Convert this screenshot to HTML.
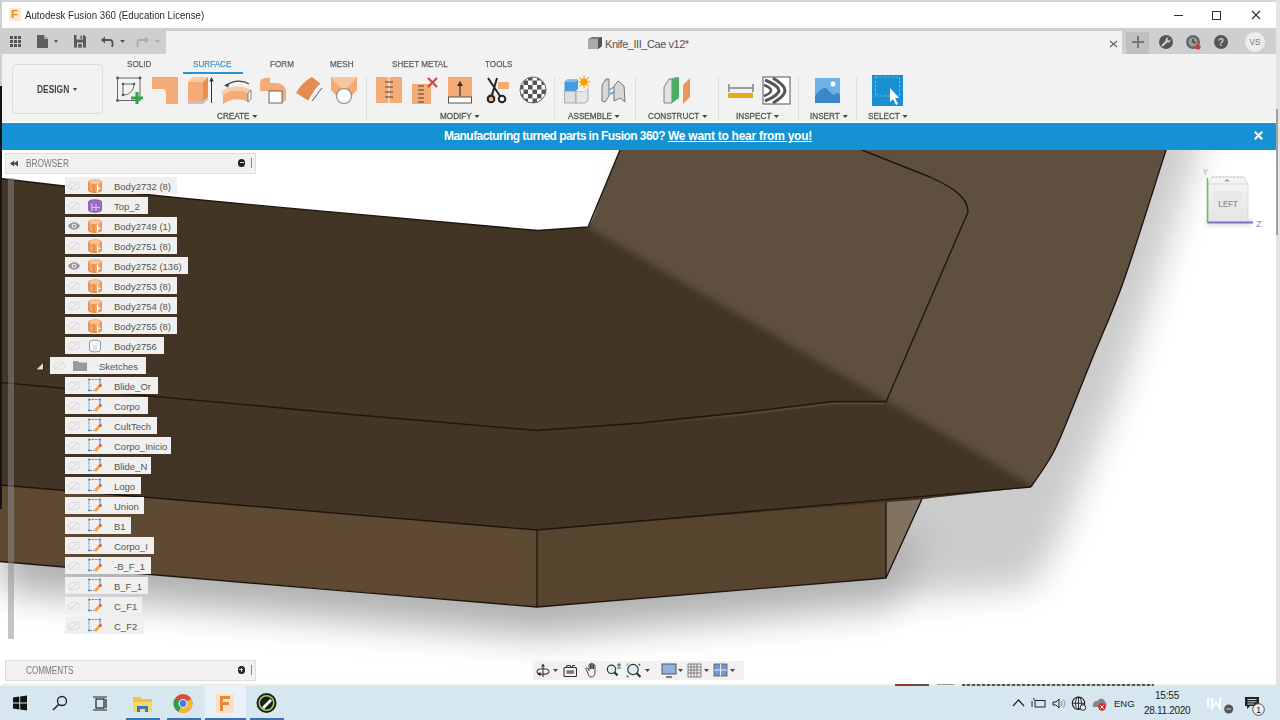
<!DOCTYPE html>
<html><head><meta charset="utf-8">
<style>
*{margin:0;padding:0;box-sizing:border-box}
html,body{width:1280px;height:720px;overflow:hidden;background:#fff}
body{position:relative;font-family:"Liberation Sans",sans-serif;color:#333}
.a{position:absolute}
.nx{position:absolute;white-space:nowrap;transform-origin:0 0}
.tab{position:absolute;top:58.5px;font-size:9.3px;color:#5e5e5e;-webkit-text-stroke:.25px #5e5e5e;transform:scaleX(.875);transform-origin:0 0;white-space:nowrap}
.grp{position:absolute;top:110px;font-size:9.5px;color:#555;-webkit-text-stroke:.3px #555;transform:scaleX(.86);transform-origin:0 0;white-space:nowrap}
.grp i,.dd{display:inline-block;width:0;height:0;border-left:3px solid transparent;border-right:3px solid transparent;border-top:3.5px solid #444;margin-left:3px;vertical-align:1.5px;-webkit-text-stroke:0}
.sep{position:absolute;top:77px;width:1px;height:43px;background:#dedede}
.row{position:absolute;height:17px;background:#f0f0f0;font-size:9.5px;color:#555;line-height:17px;white-space:nowrap}
.row span{position:absolute;left:49px;top:1px}
.row svg{position:absolute}
</style></head><body>

<svg class="a" style="left:0;top:150px" width="1280" height="536" viewBox="0 150 1280 536">
<defs>
<filter id="sh" x="-30%" y="-30%" width="160%" height="160%" color-interpolation-filters="sRGB"><feGaussianBlur stdDeviation="17"/></filter>
<filter id="sh2" x="-30%" y="-30%" width="160%" height="160%" color-interpolation-filters="sRGB"><feGaussianBlur stdDeviation="17"/></filter>
<filter id="cr" x="-10%" y="-10%" width="120%" height="120%" color-interpolation-filters="sRGB"><feGaussianBlur stdDeviation="3.5"/></filter>
<linearGradient id="hlg" gradientUnits="userSpaceOnUse" x1="640" y1="0" x2="884" y2="0"><stop offset="0" stop-color="#54432e" stop-opacity="0"/><stop offset=".45" stop-color="#54432e" stop-opacity="1"/><stop offset="1" stop-color="#57462f"/></linearGradient>
<clipPath id="cl"><path d="M0,178.5 L64,186 L180,198 L300,209.2 L538,230.5 L588,227 L620,150 L1166,150 C1159.0,171.7 1136.3,245.2 1124,280 C1111.7,314.8 1102.5,333.0 1092,359 C1081.5,385.0 1068.2,419.2 1061,436 C1053.8,452.8 1054.0,451.5 1049,460 C1044.0,468.5 1034.0,482.5 1031,487 L922,499 L886,578 L537,607 L0,561.5 Z"/></clipPath>
</defs>
<rect x="0" y="150" width="1276" height="536" fill="#fff"/>
<path d="M0,178.5 L64,186 L180,198 L300,209.2 L538,230.5 L588,227 L620,150 L640,0 L1214,0 L1166,150 C1159.0,171.7 1136.3,245.2 1124,280 C1111.7,314.8 1102.5,333.0 1092,359 C1081.5,385.0 1068.2,419.2 1061,436 C1053.8,452.8 1054.0,451.5 1049,460 C1044.0,468.5 1034.0,482.5 1031,487 L537,530 L0,485 Z" transform="translate(0,100)" fill="#000" opacity="0.2" filter="url(#sh)"/>
<path d="M0,485 L537,530 L886,500 L922,499 L886,578 L537,607 L0,561.5 Z" transform="translate(6,36)" fill="#000" opacity="0.13" filter="url(#sh2)"/>
<g clip-path="url(#cl)">
<path d="M0,470 L537,515 L886,486 L940,480 L886,578 L537,607 L0,561.5 Z" fill="#5e4a32"/>
<path d="M537,515 L886,486 L930,484 L886,578 L537,607 Z" fill="#57442f"/>
<path d="M886,486 L940,480 L886,578 Z" fill="#827361"/>
<path d="M0,160 L538,230 L588,227 L640,150 L1200,150 L1200,490 L1040,490 L537,530 L0,485 Z" fill="#433525"/>
<g filter="url(#cr)"><path d="M610,120 L1200,120 L1200,500 L1040,490 L588,227 Z" fill="#5e4f3f"/></g>
<path d="M640,425 L742,414.5 L833,403.5 L884,403.5" stroke="url(#hlg)" stroke-width="2.4" fill="none"/>

</g>
<g fill="none" stroke="#1e150e" stroke-width="1.35" stroke-linejoin="round">
<path d="M0,178.5 L64,186 L180,198 L300,209.2 L538,230.5 L588,227 L620,150"/>
<path d="M862,150 L930,177 C952,187 968,197 968,212 L886,402"/>
<path d="M0,382.4 L60,388 L260,406 L340,413.5 L537,430.5 L640,423 L742,412.5 L833,401.5 L886,401.5"/>
<path d="M0,485 L537,530 L1031,487"/>
<path d="M1166,150 C1159.0,171.7 1136.3,245.2 1124,280 C1111.7,314.8 1102.5,333.0 1092,359 C1081.5,385.0 1068.2,419.2 1061,436 C1053.8,452.8 1054.0,451.5 1049,460 C1044.0,468.5 1034.0,482.5 1031,487"/>
<path d="M537,530 L537,607"/>
<path d="M886,502 L886,578"/>
<path d="M0,561.5 L180,577 L340,590.6 L537,607 L886,578 L922,499"/>
</g>
</svg>

<div class="a" style="left:0;top:0;width:1280px;height:2px;background:#d6d6d6"></div>
<div class="a" style="left:0;top:2px;width:1276px;height:26px;background:#fff"></div>
<div class="a" style="left:0;top:0;width:2px;height:86px;background:#cfcfcf"></div>
<div class="a" style="left:0;top:86px;width:2px;height:423px;background:#141414"></div>
<div class="a" style="left:1276px;top:0;width:4px;height:686px;background:#e3e3e3"></div>
<div class="a" style="left:1276px;top:109px;width:2px;height:126px;background:#a0a0a0"></div>

<div class="a" style="left:9px;top:8px;width:12px;height:13px;background:#fde6cf;border-radius:1px"></div>
<div class="a" style="left:11px;top:8px;font-size:11.5px;font-weight:bold;color:#e58a2d">F</div>
<div class="nx" style="left:25px;top:9px;font-size:11px;transform:scaleX(.88);color:#2a2a2a">Autodesk Fusion 360 (Education License)</div>
<div class="a" style="left:1174px;top:15px;width:9px;height:1px;background:#333"></div>
<div class="a" style="left:1212px;top:11px;width:9px;height:9px;border:1px solid #333"></div>
<svg class="a" style="left:1251px;top:10px" width="10" height="10"><path d="M1,1 L9,9 M9,1 L1,9" stroke="#333" stroke-width="1.1"/></svg>

<div class="a" style="left:166px;top:28px;width:956px;height:3px;background:#cfcfcf"></div>
<div class="a" style="left:166px;top:31px;width:956px;height:23px;background:#f2f2f2"></div>
<div class="a" style="left:2px;top:28px;width:164px;height:26px;background:#cfcfcf"></div>
<div class="a" style="left:1122px;top:28px;width:154px;height:26px;background:#cfcfcf"></div>
<div class="a" style="left:1126px;top:32px;width:23px;height:22px;background:#c0c0c0"></div>
<svg class="a" style="left:0;top:28px" width="170" height="26" viewBox="0 28 170 26">
<g fill="#555">
<rect x="10" y="36" width="3" height="3"/><rect x="14" y="36" width="3" height="3"/><rect x="18" y="36" width="3" height="3"/>
<rect x="10" y="40" width="3" height="3"/><rect x="14" y="40" width="3" height="3"/><rect x="18" y="40" width="3" height="3"/>
<rect x="10" y="44" width="3" height="3"/><rect x="14" y="44" width="3" height="3"/><rect x="18" y="44" width="3" height="3"/>
<path d="M37,35 L44,35 L48,39 L48,48 L37,48 Z" fill="#5e5e5e"/><path d="M44,35 L44,39 L48,39 Z" fill="#a8a8a8"/>
<path d="M54,40 L58,40 L56,43 Z"/>
<path d="M74,35 L84,35 L86,37 L86,47.5 L74,47.5 Z" fill="#5a5a5a"/><rect x="76.5" y="35" width="6.5" height="4.5" fill="#cfcfcf"/><rect x="80.5" y="35.8" width="1.6" height="3" fill="#5a5a5a"/><rect x="77" y="42.5" width="6" height="5" fill="#cfcfcf"/><rect x="78.2" y="43.8" width="3.6" height="3.7" fill="#5a5a5a"/>
<path d="M120,40 L125,40 L122.5,43 Z"/>
</g>
<path d="M104,40 L110,40 C113,40 113,44 112,47" fill="none" stroke="#555" stroke-width="1.8"/>
<path d="M101,40 L105,36.5 L105,43.5 Z" fill="#555"/>
<path d="M146,40 L140,40 C137,40 137,44 138,47" fill="none" stroke="#aaa" stroke-width="1.8"/>
<path d="M149,40 L145,36.5 L145,43.5 Z" fill="#aaa"/>
<path d="M155,40 L160,40 L157.5,43 Z" fill="#aaa"/>
</svg>
<svg class="a" style="left:587px;top:36px" width="16" height="14" viewBox="0 0 16 14">
<path d="M1,3 L5,1 L15,1 L15,10 L11,13 L1,13 Z" fill="#777"/>
<path d="M1,3 L11,3 L11,13 L1,13 Z" fill="#aaa"/><path d="M11,3 L15,1 L15,10 L11,13 Z" fill="#555"/>
</svg>
<div class="nx" style="left:605px;top:37.5px;font-size:11px;letter-spacing:-0.45px;color:#555">Knife_III_Cae v12*</div>
<svg class="a" style="left:1109px;top:40px" width="9" height="8"><path d="M1,1 L8,7 M8,1 L1,7" stroke="#666" stroke-width="1.3"/></svg>
<svg class="a" style="left:1122px;top:28px" width="154" height="26" viewBox="1122 28 154 26">
<path d="M1132,42 L1144,42 M1138,36 L1138,48" stroke="#777" stroke-width="2"/>
<circle cx="1166" cy="42" r="7" fill="#555"/>
<path d="M1162,46 L1167,41" stroke="#cfcfcf" stroke-width="2"/><circle cx="1168" cy="40" r="2.5" fill="#cfcfcf"/><circle cx="1169" cy="39" r="1.5" fill="#555"/>
<circle cx="1193" cy="42" r="7" fill="#666"/><circle cx="1193" cy="42" r="4.5" fill="#999"/><path d="M1193,39 L1193,42 L1196,43" stroke="#333" stroke-width="1.3" fill="none"/>
<circle cx="1198" cy="47" r="2.6" fill="#e03030"/>
<circle cx="1221" cy="42" r="7" fill="#555"/>
<text x="1221" y="46" font-size="10" font-weight="bold" fill="#cfcfcf" text-anchor="middle" font-family="Liberation Sans">?</text>
<circle cx="1255" cy="42" r="10" fill="#ececec"/>
<text x="1255" y="45.5" font-size="9" fill="#777" text-anchor="middle" font-family="Liberation Sans" transform="translate(1255,0) scale(.9,1) translate(-1255,0)">VS</text>
</svg>

<div class="a" style="left:2px;top:54px;width:1274px;height:68px;background:#f2f2f2"></div>
<div class="a" style="left:12px;top:64px;width:91px;height:50px;border:1px solid #dcdcdc;border-radius:4px;background:#f2f2f2"></div>
<div class="nx" style="left:37px;top:84px;font-size:10px;font-weight:bold;color:#444;transform:scaleX(.84)">DESIGN</div>
<div class="a" style="left:73px;top:88px;width:0;height:0;border-left:2.5px solid transparent;border-right:2.5px solid transparent;border-top:3px solid #444"></div>
<div class="tab" style="left:127px">SOLID</div>
<div class="tab" style="left:193px;color:#3a9ad6;-webkit-text-stroke:.25px #3a9ad6">SURFACE</div>
<div class="a" style="left:183px;top:72px;width:60px;height:2px;background:#2b92cf"></div>
<div class="tab" style="left:270px">FORM</div>
<div class="tab" style="left:330px">MESH</div>
<div class="tab" style="left:392px">SHEET METAL</div>
<div class="tab" style="left:485px">TOOLS</div>
<div class="grp" style="left:217px">CREATE<i></i></div>
<div class="grp" style="left:440px">MODIFY<i></i></div>
<div class="grp" style="left:568px">ASSEMBLE<i></i></div>
<div class="grp" style="left:648px">CONSTRUCT<i></i></div>
<div class="grp" style="left:736px">INSPECT<i></i></div>
<div class="grp" style="left:810px">INSERT<i></i></div>
<div class="grp" style="left:868px">SELECT<i></i></div>
<div class="sep" style="left:366px"></div>
<div class="sep" style="left:554px"></div>
<div class="sep" style="left:635px"></div>
<div class="sep" style="left:718px"></div>
<div class="sep" style="left:798px"></div>
<div class="sep" style="left:856px"></div>

<svg class="a" style="left:100px;top:70px" width="820" height="40" viewBox="100 70 820 40">
<!-- sketch -->
<g stroke="#666" stroke-width="1" fill="none"><rect x="117.5" y="78" width="22.5" height="22.5"/><path d="M123,95 L123,84 L134,84"/><path d="M134,84 C134,90 130,95 123,95"/></g>
<g fill="#555"><circle cx="117.5" cy="78" r="1.4"/><circle cx="140" cy="78" r="1.4"/><circle cx="117.5" cy="100.5" r="1.4"/><circle cx="123" cy="84" r="1.3"/><circle cx="134" cy="84" r="1.3"/><circle cx="123" cy="95" r="1.3"/></g>
<path d="M131,98 L143,98 M137,92 L137,104" stroke="#2ea84a" stroke-width="3.2"/>
<!-- L shape -->
<path d="M152,77 L178,77 L178,104 L166,104 L166,93 C166,90 165,89 162,89 L152,89 Z" fill="#f4ab75"/>
<!-- extrude box -->
<path d="M188,82 L203,82 L203,101 L188,101 Z" fill="#f4ab75"/>
<path d="M188,82 L192.5,77 L208,77 L203,82 Z" fill="#f9c9a0"/>
<path d="M203,82 L208,77 L208,97 L203,101 Z" fill="#e8914f"/>
<path d="M188,101 L203,101 L208,97 L208,99.5 L203,104 L188,104 Z" fill="#c4c4c4"/>
<path d="M211.5,103 L211.5,79" stroke="#333" stroke-width="1"/><path d="M209.3,81.5 L211.5,77 L213.7,81.5 Z" fill="#333"/>
<!-- revolve -->
<path d="M223,95 C230,89 242,89 248,93 L248,102 C242,98 230,98 223,104 Z" fill="#f4ab75"/>
<path d="M223,95 C230,89 242,89 248,93 L251,90 C244,85 229,85 221,92 Z" fill="#f9cba3"/>
<path d="M248,93 L251,90 L251,99 L248,102 Z" fill="#fff" stroke="#666" stroke-width=".8"/>
<path d="M227,85 C234,80 243,80 249,84" stroke="#444" stroke-width="1.1" fill="none"/><path d="M224,85.5 L228.5,83 L228.5,87.5 Z" fill="#444"/>
<!-- boolean -->
<path d="M260,83 C260,78 266,77 270,78 L270,83 L276,83 C282,83 286,87 286,92 L286,100 L282,103 L274,103 L274,91 L260,91 Z" fill="#f4ab75"/>
<rect x="269" y="91" width="13" height="12" fill="#fff" stroke="#555" stroke-width=".9"/>
<!-- patch -->
<path d="M296,93 C300,86 306,80 312,77 L321,84 C316,88 312,95 309,101 Z" fill="#e58c50"/>
<path d="M309,101 C312,95 316,88 321,84" stroke="#fff" stroke-width="1.3" fill="none"/>
<path d="M312,101 C316,97 318,92 322,88" stroke="#555" stroke-width="1" fill="none"/>
<!-- loft -->
<path d="M331,77 L357,77 L357,90 L350,98 L338,98 L331,90 Z" fill="#f4ab75"/>
<path d="M331,77 L344,92 L357,77 Z" fill="#f8c79e"/>
<circle cx="344" cy="96" r="7.5" fill="#f8f8f8" stroke="#888" stroke-width="1.1"/>
<!-- stitch -->
<rect x="376" y="77" width="26" height="26" fill="#f4ab75"/>
<path d="M389,77 L389,103" stroke="#fff" stroke-width="1"/>
<path d="M385,82 L393,82 M385,87 L393,87 M385,92 L393,92 M385,97 L393,97" stroke="#444" stroke-width="1.2"/>
<!-- unstitch -->
<rect x="412" y="84" width="19" height="20" fill="#f4ab75"/>
<path d="M418,86 L424,86 M418,90 L424,90 M418,94 L424,94 M418,98 L424,98 M418,102 L424,102" stroke="#444" stroke-width="1.1"/>
<path d="M428,78 L437,87 M437,78 L428,87" stroke="#e0403a" stroke-width="2.2"/>
<!-- reverse normal -->
<rect x="448" y="77" width="24" height="20" fill="#f4ab75"/>
<rect x="448.5" y="97" width="23" height="6" fill="#fff" stroke="#555" stroke-width="1"/>
<path d="M460,96 L460,84" stroke="#333" stroke-width="1.2"/><path d="M457,86 L460,81 L463,86 Z" fill="#333"/>
<!-- trim scissors -->
<rect x="498" y="82" width="11" height="7" fill="#f4ab75"/><path d="M486,97 L492,92 L496,97 L490,101 Z" fill="#f4ab75"/>
<path d="M488,78 L500,96 M497,78 L492,95" stroke="#222" stroke-width="2"/>
<circle cx="491" cy="99" r="3.3" fill="none" stroke="#222" stroke-width="2"/><circle cx="502" cy="99" r="3.3" fill="none" stroke="#222" stroke-width="2"/>
<!-- checker sphere -->
<defs><pattern id="chk" x="519" y="76" width="9" height="9" patternUnits="userSpaceOnUse"><rect width="9" height="9" fill="#fff"/><rect width="4.5" height="4.5" fill="#555"/><rect x="4.5" y="4.5" width="4.5" height="4.5" fill="#555"/></pattern></defs>
<circle cx="533" cy="90" r="13" fill="url(#chk)" stroke="#666" stroke-width="1"/>
<!-- new component -->
<path d="M564.5,91 L576,91 L576,103 L564.5,103 Z" fill="#dedede" stroke="#999" stroke-width=".8"/>
<path d="M576,91 L585,91 L588,88.5 L588,100.5 L585,103 L576,103 Z" fill="#e6e6e6" stroke="#999" stroke-width=".8"/>
<path d="M576,91 L579,88.5 L588,88.5 L585,91 Z" fill="#f4f4f4"/>
<path d="M564.5,82 L567,79.5 L578,79.5 L578,89 L575.5,91 L564.5,91 Z" fill="#4a9ae0"/>
<path d="M564.5,82 L567,79.5 L578,79.5 L575.5,82 Z" fill="#7fbcef"/>
<circle cx="584" cy="82" r="3.6" fill="#f5a300"/>
<path d="M584,75.5 L584,88.5 M577.5,82 L590.5,82 M579.4,77.4 L588.6,86.6 M588.6,77.4 L579.4,86.6" stroke="#f5a300" stroke-width="1.1"/>
<!-- joint -->
<path d="M602,85 L606,79 L609,79 L609,96 L605,102 L602,101 Z" fill="#d8d8d8" stroke="#777" stroke-width="1"/>
<path d="M605.5,81 L609,79" stroke="#999" stroke-width="1"/>
<path d="M614,86 L618,81 L624,86 L625,102 L620,98 L614,101 Z" fill="#d8d8d8" stroke="#777" stroke-width="1"/>
<path d="M609,90 L614,87 M610,94 L614,92" stroke="#4a9ae0" stroke-width="1.4"/>
<!-- construct -->
<path d="M664,87 L669,79 L672,79 L672,103 L664,103 Z" fill="#e2e2e2" stroke="#777" stroke-width=".9"/>
<path d="M672,79 L679,77 L679,98 L672,103 Z" fill="#4aad63"/>
<path d="M669,79 L676,77 L679,77 L672,79 Z" fill="#999"/>
<path d="M683,85 L690,78 L690,97 L683,104 Z" fill="#e9965c"/>
<!-- measure -->
<path d="M729,84 L729,92 M753,84 L753,92 M730,88 L752,88" stroke="#444" stroke-width="1"/>
<rect x="728" y="93" width="25" height="5" fill="#e6a823"/>
<!-- zebra -->
<rect x="763" y="77" width="27" height="27" fill="#fff" stroke="#555" stroke-width="1"/>
<path d="M765,80 C775,84 779,88 779,90.5 C779,93 775,97 765,101" stroke="#555" stroke-width="3" fill="none"/>
<path d="M773,78 C783,84 785,88 785,90.5 C785,93 783,97 773,103" stroke="#555" stroke-width="3" fill="none"/>
<path d="M764,85 C769,87 771,89 771,90.5 C771,92 769,94 764,96" stroke="#555" stroke-width="2.5" fill="none"/>
<!-- insert image -->
<rect x="815" y="78" width="25" height="25" fill="#6cb2e6"/>
<path d="M815,103 L815,96 C818,92 822,88 825,88 C828,88 831,95 834,95 C836,93 838,92 840,95 L840,103 Z" fill="#3a86c8"/>
<circle cx="833" cy="84" r="2.5" fill="#fff"/>
<!-- select -->
<rect x="872" y="75" width="31" height="31" fill="#1a8fd4"/>
<rect x="875.5" y="77" width="24" height="19" fill="none" stroke="#6cc8c0" stroke-width=".9" stroke-dasharray="2.5,1.5"/>
<path d="M890,88 L890,102 L893,99 L896,105 L898,104 L895,98 L899,98 Z" fill="#fff"/>
</svg>

<div class="a" style="left:2px;top:123px;width:1274px;height:26.5px;background:#1592d3"></div>
<div class="nx" style="left:444px;top:129px;font-size:12px;font-weight:bold;letter-spacing:-0.546px;color:#fff">Manufacturing turned parts in Fusion 360?</div>
<div class="nx" style="left:668px;top:129px;font-size:12px;font-weight:bold;letter-spacing:-0.26px;color:#fff;text-decoration:underline">We want to hear from you!</div>
<svg class="a" style="left:1254px;top:131px" width="9" height="9"><path d="M.8,.8 L8.2,8.2 M8.2,.8 L.8,8.2" stroke="#fff" stroke-width="2"/></svg>

<div class="a" style="left:8px;top:178px;width:6px;height:461px;background:rgba(140,140,140,.5)"></div>
<div class="a" style="left:5px;top:153px;width:251px;height:21px;background:#f1f1f1;border:1px solid #dedede"></div>
<svg class="a" style="left:10px;top:160px" width="9" height="7"><path d="M0,3.5 L4.2,0.5 L4.2,6.5 Z M3.8,3.5 L8,0.5 L8,6.5 Z" fill="#444"/></svg>
<div class="nx" style="left:26px;top:158px;font-size:10px;color:#777;transform:scaleX(.83)">BROWSER</div>
<div class="a" style="left:237.8px;top:159px;width:7.5px;height:7.5px;border-radius:50%;background:#222"></div>
<div class="a" style="left:239.5px;top:162.3px;width:4px;height:1px;background:#ddd"></div>
<div class="a" style="left:251px;top:158px;width:1px;height:10px;background:#888"></div>

<div class="row" style="left:65px;top:177px;width:112.0px"><span>Body2732 (8)</span></div>
<svg class="a" style="left:67px;top:181px" width="14" height="10" viewBox="0 0 14 10"><path d="M1,5 C4,0 10,0 13,5 C10,10 4,10 1,5 Z" fill="none" stroke="#ddd" stroke-width="1.2"/><path d="M2,9 L12,1" stroke="#ddd" stroke-width="1.2"/></svg>
<svg class="a" style="left:88px;top:179px" width="14" height="14" viewBox="0 0 14 14"><path d="M0.7,3 C0.7,0.3 13.3,0.3 13.3,3 L13.3,11.5 C13.3,14 0.7,14 0.7,11.5 Z" fill="#f2a262" stroke="#d4792f" stroke-width=".9"/><ellipse cx="7" cy="3" rx="6.1" ry="2.2" fill="#f8c496"/><path d="M6,5 L6,13.6" stroke="#d4792f" stroke-width=".9"/><path d="M9.6,5.5 L9.6,13.8 M9.6,9.3 L12.6,9.3" stroke="#fff" stroke-width="1.3"/></svg>
<div class="row" style="left:65px;top:197px;width:82.7px"><span>Top_2</span></div>
<svg class="a" style="left:67px;top:201px" width="14" height="10" viewBox="0 0 14 10"><path d="M1,5 C4,0 10,0 13,5 C10,10 4,10 1,5 Z" fill="none" stroke="#ddd" stroke-width="1.2"/><path d="M2,9 L12,1" stroke="#ddd" stroke-width="1.2"/></svg>
<svg class="a" style="left:88px;top:199px" width="14" height="14" viewBox="0 0 14 14"><path d="M0.5,3 C0.5,0 13.5,0 13.5,3 L13.5,11 C13.5,14 0.5,14 0.5,11 Z" fill="#9a6bc9" stroke="#7a4eaa" stroke-width=".8"/><path d="M4,5 L4,12 M8,5 L8,12 M4,8.5 L12,8.5" stroke="#d8c2ee" stroke-width="1.2"/></svg>
<div class="row" style="left:65px;top:217px;width:112.0px"><span>Body2749 (1)</span></div>
<svg class="a" style="left:67px;top:221px" width="14" height="10" viewBox="0 0 14 10"><path d="M1,5 C4,0 10,0 13,5 C10,10 4,10 1,5 Z" fill="#999"/><circle cx="7" cy="5" r="2.2" fill="#eee"/><circle cx="7" cy="5" r="1.2" fill="#999"/></svg>
<svg class="a" style="left:88px;top:219px" width="14" height="14" viewBox="0 0 14 14"><path d="M0.7,3 C0.7,0.3 13.3,0.3 13.3,3 L13.3,11.5 C13.3,14 0.7,14 0.7,11.5 Z" fill="#f2a262" stroke="#d4792f" stroke-width=".9"/><ellipse cx="7" cy="3" rx="6.1" ry="2.2" fill="#f8c496"/><path d="M6,5 L6,13.6" stroke="#d4792f" stroke-width=".9"/><path d="M9.6,5.5 L9.6,13.8 M9.6,9.3 L12.6,9.3" stroke="#fff" stroke-width="1.3"/></svg>
<div class="row" style="left:65px;top:237px;width:112.0px"><span>Body2751 (8)</span></div>
<svg class="a" style="left:67px;top:241px" width="14" height="10" viewBox="0 0 14 10"><path d="M1,5 C4,0 10,0 13,5 C10,10 4,10 1,5 Z" fill="none" stroke="#ddd" stroke-width="1.2"/><path d="M2,9 L12,1" stroke="#ddd" stroke-width="1.2"/></svg>
<svg class="a" style="left:88px;top:239px" width="14" height="14" viewBox="0 0 14 14"><path d="M0.7,3 C0.7,0.3 13.3,0.3 13.3,3 L13.3,11.5 C13.3,14 0.7,14 0.7,11.5 Z" fill="#f2a262" stroke="#d4792f" stroke-width=".9"/><ellipse cx="7" cy="3" rx="6.1" ry="2.2" fill="#f8c496"/><path d="M6,5 L6,13.6" stroke="#d4792f" stroke-width=".9"/><path d="M9.6,5.5 L9.6,13.8 M9.6,9.3 L12.6,9.3" stroke="#fff" stroke-width="1.3"/></svg>
<div class="row" style="left:65px;top:257px;width:122.5px"><span>Body2752 (136)</span></div>
<svg class="a" style="left:67px;top:261px" width="14" height="10" viewBox="0 0 14 10"><path d="M1,5 C4,0 10,0 13,5 C10,10 4,10 1,5 Z" fill="#999"/><circle cx="7" cy="5" r="2.2" fill="#eee"/><circle cx="7" cy="5" r="1.2" fill="#999"/></svg>
<svg class="a" style="left:88px;top:259px" width="14" height="14" viewBox="0 0 14 14"><path d="M0.7,3 C0.7,0.3 13.3,0.3 13.3,3 L13.3,11.5 C13.3,14 0.7,14 0.7,11.5 Z" fill="#f2a262" stroke="#d4792f" stroke-width=".9"/><ellipse cx="7" cy="3" rx="6.1" ry="2.2" fill="#f8c496"/><path d="M6,5 L6,13.6" stroke="#d4792f" stroke-width=".9"/><path d="M9.6,5.5 L9.6,13.8 M9.6,9.3 L12.6,9.3" stroke="#fff" stroke-width="1.3"/></svg>
<div class="row" style="left:65px;top:277px;width:112.0px"><span>Body2753 (8)</span></div>
<svg class="a" style="left:67px;top:281px" width="14" height="10" viewBox="0 0 14 10"><path d="M1,5 C4,0 10,0 13,5 C10,10 4,10 1,5 Z" fill="none" stroke="#ddd" stroke-width="1.2"/><path d="M2,9 L12,1" stroke="#ddd" stroke-width="1.2"/></svg>
<svg class="a" style="left:88px;top:279px" width="14" height="14" viewBox="0 0 14 14"><path d="M0.7,3 C0.7,0.3 13.3,0.3 13.3,3 L13.3,11.5 C13.3,14 0.7,14 0.7,11.5 Z" fill="#f2a262" stroke="#d4792f" stroke-width=".9"/><ellipse cx="7" cy="3" rx="6.1" ry="2.2" fill="#f8c496"/><path d="M6,5 L6,13.6" stroke="#d4792f" stroke-width=".9"/><path d="M9.6,5.5 L9.6,13.8 M9.6,9.3 L12.6,9.3" stroke="#fff" stroke-width="1.3"/></svg>
<div class="row" style="left:65px;top:297px;width:112.0px"><span>Body2754 (8)</span></div>
<svg class="a" style="left:67px;top:301px" width="14" height="10" viewBox="0 0 14 10"><path d="M1,5 C4,0 10,0 13,5 C10,10 4,10 1,5 Z" fill="none" stroke="#ddd" stroke-width="1.2"/><path d="M2,9 L12,1" stroke="#ddd" stroke-width="1.2"/></svg>
<svg class="a" style="left:88px;top:299px" width="14" height="14" viewBox="0 0 14 14"><path d="M0.7,3 C0.7,0.3 13.3,0.3 13.3,3 L13.3,11.5 C13.3,14 0.7,14 0.7,11.5 Z" fill="#f2a262" stroke="#d4792f" stroke-width=".9"/><ellipse cx="7" cy="3" rx="6.1" ry="2.2" fill="#f8c496"/><path d="M6,5 L6,13.6" stroke="#d4792f" stroke-width=".9"/><path d="M9.6,5.5 L9.6,13.8 M9.6,9.3 L12.6,9.3" stroke="#fff" stroke-width="1.3"/></svg>
<div class="row" style="left:65px;top:317px;width:112.0px"><span>Body2755 (8)</span></div>
<svg class="a" style="left:67px;top:321px" width="14" height="10" viewBox="0 0 14 10"><path d="M1,5 C4,0 10,0 13,5 C10,10 4,10 1,5 Z" fill="none" stroke="#ddd" stroke-width="1.2"/><path d="M2,9 L12,1" stroke="#ddd" stroke-width="1.2"/></svg>
<svg class="a" style="left:88px;top:319px" width="14" height="14" viewBox="0 0 14 14"><path d="M0.7,3 C0.7,0.3 13.3,0.3 13.3,3 L13.3,11.5 C13.3,14 0.7,14 0.7,11.5 Z" fill="#f2a262" stroke="#d4792f" stroke-width=".9"/><ellipse cx="7" cy="3" rx="6.1" ry="2.2" fill="#f8c496"/><path d="M6,5 L6,13.6" stroke="#d4792f" stroke-width=".9"/><path d="M9.6,5.5 L9.6,13.8 M9.6,9.3 L12.6,9.3" stroke="#fff" stroke-width="1.3"/></svg>
<div class="row" style="left:65px;top:337px;width:99.0px"><span>Body2756</span></div>
<svg class="a" style="left:67px;top:341px" width="14" height="10" viewBox="0 0 14 10"><path d="M1,5 C4,0 10,0 13,5 C10,10 4,10 1,5 Z" fill="none" stroke="#ddd" stroke-width="1.2"/><path d="M2,9 L12,1" stroke="#ddd" stroke-width="1.2"/></svg>
<svg class="a" style="left:88px;top:339px" width="14" height="14" viewBox="0 0 14 14"><path d="M1.5,3 C1.5,0.5 12.5,0.5 12.5,3 L12.5,11 C12.5,13.5 1.5,13.5 1.5,11 Z" fill="#f7f7f7" stroke="#7a8fa5" stroke-width=".9"/><path d="M6,6 L6,11 M8,6 L8,11" stroke="#bbb" stroke-width=".8"/></svg>
<div class="row" style="left:50px;top:357px;width:96px"><span style="left:49px">Sketches</span></div>
<svg class="a" style="left:35px;top:361px" width="10" height="10"><path d="M8.5,1 L8.5,9 L0.5,9 Z" fill="#ddd" stroke="#222" stroke-width="1"/></svg>
<svg class="a" style="left:52px;top:361px" width="14" height="10" viewBox="0 0 14 10"><path d="M1,5 C4,0 10,0 13,5 C10,10 4,10 1,5 Z" fill="none" stroke="#ddd" stroke-width="1.2"/><path d="M2,9 L12,1" stroke="#ddd" stroke-width="1.2"/></svg>
<svg class="a" style="left:73px;top:360px" width="14" height="11"><path d="M0,1 L5,1 L6,2.5 L14,2.5 L14,11 L0,11 Z" fill="#9a9a9a"/></svg>
<div class="row" style="left:65px;top:377px;width:93.0px"><span>Blide_Or</span></div>
<svg class="a" style="left:67px;top:381px" width="14" height="10" viewBox="0 0 14 10"><path d="M1,5 C4,0 10,0 13,5 C10,10 4,10 1,5 Z" fill="none" stroke="#ddd" stroke-width="1.2"/><path d="M2,9 L12,1" stroke="#ddd" stroke-width="1.2"/></svg>
<svg class="a" style="left:88px;top:378px" width="14" height="14" viewBox="0 0 14 14"><path d="M1,1.5 L12,1.5 M1,1.5 L1,12.5 L6,12.5" stroke="#4a8dc7" stroke-width="1" fill="none" stroke-dasharray="2,1"/><path d="M12,1.5 L12,7" stroke="#4a8dc7" stroke-width="1" fill="none"/><circle cx="1" cy="1.5" r="1" fill="#4a8dc7"/><circle cx="12" cy="1.5" r="1" fill="#4a8dc7"/><circle cx="1" cy="12.5" r="1" fill="#4a8dc7"/><path d="M7,13 L12.5,7" stroke="#f0a23a" stroke-width="2.6"/><circle cx="12.5" cy="7.5" r="1.3" fill="#e0403a"/></svg>
<div class="row" style="left:65px;top:397px;width:82.7px"><span>Corpo</span></div>
<svg class="a" style="left:67px;top:401px" width="14" height="10" viewBox="0 0 14 10"><path d="M1,5 C4,0 10,0 13,5 C10,10 4,10 1,5 Z" fill="none" stroke="#ddd" stroke-width="1.2"/><path d="M2,9 L12,1" stroke="#ddd" stroke-width="1.2"/></svg>
<svg class="a" style="left:88px;top:398px" width="14" height="14" viewBox="0 0 14 14"><path d="M1,1.5 L12,1.5 M1,1.5 L1,12.5 L6,12.5" stroke="#4a8dc7" stroke-width="1" fill="none" stroke-dasharray="2,1"/><path d="M12,1.5 L12,7" stroke="#4a8dc7" stroke-width="1" fill="none"/><circle cx="1" cy="1.5" r="1" fill="#4a8dc7"/><circle cx="12" cy="1.5" r="1" fill="#4a8dc7"/><circle cx="1" cy="12.5" r="1" fill="#4a8dc7"/><path d="M7,13 L12.5,7" stroke="#f0a23a" stroke-width="2.6"/><circle cx="12.5" cy="7.5" r="1.3" fill="#e0403a"/></svg>
<div class="row" style="left:65px;top:417px;width:92.0px"><span>CultTech</span></div>
<svg class="a" style="left:67px;top:421px" width="14" height="10" viewBox="0 0 14 10"><path d="M1,5 C4,0 10,0 13,5 C10,10 4,10 1,5 Z" fill="none" stroke="#ddd" stroke-width="1.2"/><path d="M2,9 L12,1" stroke="#ddd" stroke-width="1.2"/></svg>
<svg class="a" style="left:88px;top:418px" width="14" height="14" viewBox="0 0 14 14"><path d="M1,1.5 L12,1.5 M1,1.5 L1,12.5 L6,12.5" stroke="#4a8dc7" stroke-width="1" fill="none" stroke-dasharray="2,1"/><path d="M12,1.5 L12,7" stroke="#4a8dc7" stroke-width="1" fill="none"/><circle cx="1" cy="1.5" r="1" fill="#4a8dc7"/><circle cx="12" cy="1.5" r="1" fill="#4a8dc7"/><circle cx="1" cy="12.5" r="1" fill="#4a8dc7"/><path d="M7,13 L12.5,7" stroke="#f0a23a" stroke-width="2.6"/><circle cx="12.5" cy="7.5" r="1.3" fill="#e0403a"/></svg>
<div class="row" style="left:65px;top:437px;width:105.8px"><span>Corpo_Inicio</span></div>
<svg class="a" style="left:67px;top:441px" width="14" height="10" viewBox="0 0 14 10"><path d="M1,5 C4,0 10,0 13,5 C10,10 4,10 1,5 Z" fill="none" stroke="#ddd" stroke-width="1.2"/><path d="M2,9 L12,1" stroke="#ddd" stroke-width="1.2"/></svg>
<svg class="a" style="left:88px;top:438px" width="14" height="14" viewBox="0 0 14 14"><path d="M1,1.5 L12,1.5 M1,1.5 L1,12.5 L6,12.5" stroke="#4a8dc7" stroke-width="1" fill="none" stroke-dasharray="2,1"/><path d="M12,1.5 L12,7" stroke="#4a8dc7" stroke-width="1" fill="none"/><circle cx="1" cy="1.5" r="1" fill="#4a8dc7"/><circle cx="12" cy="1.5" r="1" fill="#4a8dc7"/><circle cx="1" cy="12.5" r="1" fill="#4a8dc7"/><path d="M7,13 L12.5,7" stroke="#f0a23a" stroke-width="2.6"/><circle cx="12.5" cy="7.5" r="1.3" fill="#e0403a"/></svg>
<div class="row" style="left:65px;top:457px;width:86.0px"><span>Blide_N</span></div>
<svg class="a" style="left:67px;top:461px" width="14" height="10" viewBox="0 0 14 10"><path d="M1,5 C4,0 10,0 13,5 C10,10 4,10 1,5 Z" fill="none" stroke="#ddd" stroke-width="1.2"/><path d="M2,9 L12,1" stroke="#ddd" stroke-width="1.2"/></svg>
<svg class="a" style="left:88px;top:458px" width="14" height="14" viewBox="0 0 14 14"><path d="M1,1.5 L12,1.5 M1,1.5 L1,12.5 L6,12.5" stroke="#4a8dc7" stroke-width="1" fill="none" stroke-dasharray="2,1"/><path d="M12,1.5 L12,7" stroke="#4a8dc7" stroke-width="1" fill="none"/><circle cx="1" cy="1.5" r="1" fill="#4a8dc7"/><circle cx="12" cy="1.5" r="1" fill="#4a8dc7"/><circle cx="1" cy="12.5" r="1" fill="#4a8dc7"/><path d="M7,13 L12.5,7" stroke="#f0a23a" stroke-width="2.6"/><circle cx="12.5" cy="7.5" r="1.3" fill="#e0403a"/></svg>
<div class="row" style="left:65px;top:477px;width:75.6px"><span>Logo</span></div>
<svg class="a" style="left:67px;top:481px" width="14" height="10" viewBox="0 0 14 10"><path d="M1,5 C4,0 10,0 13,5 C10,10 4,10 1,5 Z" fill="none" stroke="#ddd" stroke-width="1.2"/><path d="M2,9 L12,1" stroke="#ddd" stroke-width="1.2"/></svg>
<svg class="a" style="left:88px;top:478px" width="14" height="14" viewBox="0 0 14 14"><path d="M1,1.5 L12,1.5 M1,1.5 L1,12.5 L6,12.5" stroke="#4a8dc7" stroke-width="1" fill="none" stroke-dasharray="2,1"/><path d="M12,1.5 L12,7" stroke="#4a8dc7" stroke-width="1" fill="none"/><circle cx="1" cy="1.5" r="1" fill="#4a8dc7"/><circle cx="12" cy="1.5" r="1" fill="#4a8dc7"/><circle cx="1" cy="12.5" r="1" fill="#4a8dc7"/><path d="M7,13 L12.5,7" stroke="#f0a23a" stroke-width="2.6"/><circle cx="12.5" cy="7.5" r="1.3" fill="#e0403a"/></svg>
<div class="row" style="left:65px;top:497px;width:79.4px"><span>Union</span></div>
<svg class="a" style="left:67px;top:501px" width="14" height="10" viewBox="0 0 14 10"><path d="M1,5 C4,0 10,0 13,5 C10,10 4,10 1,5 Z" fill="none" stroke="#ddd" stroke-width="1.2"/><path d="M2,9 L12,1" stroke="#ddd" stroke-width="1.2"/></svg>
<svg class="a" style="left:88px;top:498px" width="14" height="14" viewBox="0 0 14 14"><path d="M1,1.5 L12,1.5 M1,1.5 L1,12.5 L6,12.5" stroke="#4a8dc7" stroke-width="1" fill="none" stroke-dasharray="2,1"/><path d="M12,1.5 L12,7" stroke="#4a8dc7" stroke-width="1" fill="none"/><circle cx="1" cy="1.5" r="1" fill="#4a8dc7"/><circle cx="12" cy="1.5" r="1" fill="#4a8dc7"/><circle cx="1" cy="12.5" r="1" fill="#4a8dc7"/><path d="M7,13 L12.5,7" stroke="#f0a23a" stroke-width="2.6"/><circle cx="12.5" cy="7.5" r="1.3" fill="#e0403a"/></svg>
<div class="row" style="left:65px;top:517px;width:66.0px"><span>B1</span></div>
<svg class="a" style="left:67px;top:521px" width="14" height="10" viewBox="0 0 14 10"><path d="M1,5 C4,0 10,0 13,5 C10,10 4,10 1,5 Z" fill="none" stroke="#ddd" stroke-width="1.2"/><path d="M2,9 L12,1" stroke="#ddd" stroke-width="1.2"/></svg>
<svg class="a" style="left:88px;top:518px" width="14" height="14" viewBox="0 0 14 14"><path d="M1,1.5 L12,1.5 M1,1.5 L1,12.5 L6,12.5" stroke="#4a8dc7" stroke-width="1" fill="none" stroke-dasharray="2,1"/><path d="M12,1.5 L12,7" stroke="#4a8dc7" stroke-width="1" fill="none"/><circle cx="1" cy="1.5" r="1" fill="#4a8dc7"/><circle cx="12" cy="1.5" r="1" fill="#4a8dc7"/><circle cx="1" cy="12.5" r="1" fill="#4a8dc7"/><path d="M7,13 L12.5,7" stroke="#f0a23a" stroke-width="2.6"/><circle cx="12.5" cy="7.5" r="1.3" fill="#e0403a"/></svg>
<div class="row" style="left:65px;top:537px;width:89.0px"><span>Corpo_I</span></div>
<svg class="a" style="left:67px;top:541px" width="14" height="10" viewBox="0 0 14 10"><path d="M1,5 C4,0 10,0 13,5 C10,10 4,10 1,5 Z" fill="none" stroke="#ddd" stroke-width="1.2"/><path d="M2,9 L12,1" stroke="#ddd" stroke-width="1.2"/></svg>
<svg class="a" style="left:88px;top:538px" width="14" height="14" viewBox="0 0 14 14"><path d="M1,1.5 L12,1.5 M1,1.5 L1,12.5 L6,12.5" stroke="#4a8dc7" stroke-width="1" fill="none" stroke-dasharray="2,1"/><path d="M12,1.5 L12,7" stroke="#4a8dc7" stroke-width="1" fill="none"/><circle cx="1" cy="1.5" r="1" fill="#4a8dc7"/><circle cx="12" cy="1.5" r="1" fill="#4a8dc7"/><circle cx="1" cy="12.5" r="1" fill="#4a8dc7"/><path d="M7,13 L12.5,7" stroke="#f0a23a" stroke-width="2.6"/><circle cx="12.5" cy="7.5" r="1.3" fill="#e0403a"/></svg>
<div class="row" style="left:65px;top:557px;width:86.0px"><span>-B_F_1</span></div>
<svg class="a" style="left:67px;top:561px" width="14" height="10" viewBox="0 0 14 10"><path d="M1,5 C4,0 10,0 13,5 C10,10 4,10 1,5 Z" fill="none" stroke="#ddd" stroke-width="1.2"/><path d="M2,9 L12,1" stroke="#ddd" stroke-width="1.2"/></svg>
<svg class="a" style="left:88px;top:558px" width="14" height="14" viewBox="0 0 14 14"><path d="M1,1.5 L12,1.5 M1,1.5 L1,12.5 L6,12.5" stroke="#4a8dc7" stroke-width="1" fill="none" stroke-dasharray="2,1"/><path d="M12,1.5 L12,7" stroke="#4a8dc7" stroke-width="1" fill="none"/><circle cx="1" cy="1.5" r="1" fill="#4a8dc7"/><circle cx="12" cy="1.5" r="1" fill="#4a8dc7"/><circle cx="1" cy="12.5" r="1" fill="#4a8dc7"/><path d="M7,13 L12.5,7" stroke="#f0a23a" stroke-width="2.6"/><circle cx="12.5" cy="7.5" r="1.3" fill="#e0403a"/></svg>
<div class="row" style="left:65px;top:577px;width:82.7px"><span>B_F_1</span></div>
<svg class="a" style="left:67px;top:581px" width="14" height="10" viewBox="0 0 14 10"><path d="M1,5 C4,0 10,0 13,5 C10,10 4,10 1,5 Z" fill="none" stroke="#ddd" stroke-width="1.2"/><path d="M2,9 L12,1" stroke="#ddd" stroke-width="1.2"/></svg>
<svg class="a" style="left:88px;top:578px" width="14" height="14" viewBox="0 0 14 14"><path d="M1,1.5 L12,1.5 M1,1.5 L1,12.5 L6,12.5" stroke="#4a8dc7" stroke-width="1" fill="none" stroke-dasharray="2,1"/><path d="M12,1.5 L12,7" stroke="#4a8dc7" stroke-width="1" fill="none"/><circle cx="1" cy="1.5" r="1" fill="#4a8dc7"/><circle cx="12" cy="1.5" r="1" fill="#4a8dc7"/><circle cx="1" cy="12.5" r="1" fill="#4a8dc7"/><path d="M7,13 L12.5,7" stroke="#f0a23a" stroke-width="2.6"/><circle cx="12.5" cy="7.5" r="1.3" fill="#e0403a"/></svg>
<div class="row" style="left:65px;top:597px;width:76.6px"><span>C_F1</span></div>
<svg class="a" style="left:67px;top:601px" width="14" height="10" viewBox="0 0 14 10"><path d="M1,5 C4,0 10,0 13,5 C10,10 4,10 1,5 Z" fill="none" stroke="#ddd" stroke-width="1.2"/><path d="M2,9 L12,1" stroke="#ddd" stroke-width="1.2"/></svg>
<svg class="a" style="left:88px;top:598px" width="14" height="14" viewBox="0 0 14 14"><path d="M1,1.5 L12,1.5 M1,1.5 L1,12.5 L6,12.5" stroke="#4a8dc7" stroke-width="1" fill="none" stroke-dasharray="2,1"/><path d="M12,1.5 L12,7" stroke="#4a8dc7" stroke-width="1" fill="none"/><circle cx="1" cy="1.5" r="1" fill="#4a8dc7"/><circle cx="12" cy="1.5" r="1" fill="#4a8dc7"/><circle cx="1" cy="12.5" r="1" fill="#4a8dc7"/><path d="M7,13 L12.5,7" stroke="#f0a23a" stroke-width="2.6"/><circle cx="12.5" cy="7.5" r="1.3" fill="#e0403a"/></svg>
<div class="row" style="left:65px;top:617px;width:79.0px"><span>C_F2</span></div>
<svg class="a" style="left:67px;top:621px" width="14" height="10" viewBox="0 0 14 10"><path d="M1,5 C4,0 10,0 13,5 C10,10 4,10 1,5 Z" fill="none" stroke="#ddd" stroke-width="1.2"/><path d="M2,9 L12,1" stroke="#ddd" stroke-width="1.2"/></svg>
<svg class="a" style="left:88px;top:618px" width="14" height="14" viewBox="0 0 14 14"><path d="M1,1.5 L12,1.5 M1,1.5 L1,12.5 L6,12.5" stroke="#4a8dc7" stroke-width="1" fill="none" stroke-dasharray="2,1"/><path d="M12,1.5 L12,7" stroke="#4a8dc7" stroke-width="1" fill="none"/><circle cx="1" cy="1.5" r="1" fill="#4a8dc7"/><circle cx="12" cy="1.5" r="1" fill="#4a8dc7"/><circle cx="1" cy="12.5" r="1" fill="#4a8dc7"/><path d="M7,13 L12.5,7" stroke="#f0a23a" stroke-width="2.6"/><circle cx="12.5" cy="7.5" r="1.3" fill="#e0403a"/></svg>
<div class="a" style="left:5px;top:660px;width:251px;height:21px;background:#f1f1f1;border:1px solid #dedede"></div>
<div class="nx" style="left:26px;top:665px;font-size:10px;color:#777;transform:scaleX(.815)">COMMENTS</div>
<div class="a" style="left:237.5px;top:666px;width:7.5px;height:7.5px;border-radius:50%;background:#222"></div>
<div class="a" style="left:239.3px;top:669.3px;width:4px;height:1px;background:#ddd"></div>
<div class="a" style="left:240.8px;top:667.7px;width:1px;height:4px;background:#ddd"></div>
<div class="a" style="left:251px;top:665px;width:1px;height:10px;background:#888"></div>

<svg class="a" style="left:1195px;top:160px" width="75" height="75" viewBox="1195 160 75 75">
<defs><linearGradient id="cg" x1="0" y1="0" x2="0" y2="1"><stop offset="0" stop-color="#f6f6f6"/><stop offset="1" stop-color="#e4e4e4"/></linearGradient>
<filter id="cs" x="-30%" y="-30%" width="160%" height="160%"><feGaussianBlur stdDeviation="2.5"/></filter></defs>
<rect x="1206" y="218" width="46" height="8" fill="#000" opacity=".12" filter="url(#cs)"/>
<path d="M1208,184 L1212,177 L1244,177 L1248,184 L1248,222 L1208,222 Z" fill="url(#cg)" stroke="#d4d4d4" stroke-width=".8"/>
<path d="M1208,184 L1248,184" stroke="#cfcfcf" stroke-width=".8"/>
<path d="M1212,177 L1244,177" stroke="#bbb" stroke-width=".8" stroke-dasharray="2,1.5"/>
<path d="M1224,181.5 L1230,181.5 L1227,179 Z" fill="#999"/>
<rect x="1214" y="191" width="28" height="23" fill="#e9e9e9"/>
<text x="1218.3" y="207" font-size="9" font-weight="bold" fill="#9a9a9a" font-family="Liberation Sans" transform="translate(1218.3,0) scale(.86,1) translate(-1218.3,0)">LEFT</text>
<path d="M1207.5,178 L1207.5,222.5" stroke="#78b866" stroke-width="1.6"/>
<path d="M1207.5,222.5 L1253,222.5" stroke="#7b74c4" stroke-width="1.8"/>
<text x="1202.5" y="174.5" font-size="8.5" fill="#8cc47c" font-family="Liberation Sans">Y</text>
<text x="1256" y="226.5" font-size="9" fill="#8d87cf" font-family="Liberation Sans">Z</text>
</svg>

<div class="a" style="left:533px;top:661px;width:211px;height:19px;background:#f1f1f1"></div>
<svg class="a" style="left:533px;top:661px" width="211" height="19" viewBox="533 661 211 19">
<g stroke="#333" fill="none" stroke-width="1.1">
<path d="M543,665.5 L543,677"/>
<ellipse cx="543" cy="671.5" rx="6" ry="2.8"/>
<rect x="564" y="667.5" width="12.5" height="9" rx="1"/>
<path d="M566,667.5 L567,665.5 L570,665.5 L571,667.5 M572,667.5 L573,665.5 L575,665.5"/>
<path d="M587.5,672 L586,669.5 C585.3,668.5 586.5,667.5 587.5,668.5 L589,670.5 L589,664.8 C589,663.8 590.5,663.8 590.5,664.8 L590.5,669 L590.5,663.8 C590.5,662.8 592,662.8 592,663.8 L592,669 L592,664.3 C592,663.3 593.5,663.3 593.5,664.3 L593.5,669 L593.5,665.5 C593.5,664.5 595,664.5 595,665.5 L595,672 C595,675.5 593.5,677 591,677 C589,677 588.5,675 587.5,672 Z" stroke-width=".9"/>
</g>
<path d="M543,663.5 L541,666.5 L545,666.5 Z" fill="#333"/>
<path d="M537,674 L540.5,672 L540.5,676 Z" fill="#222"/>
<rect x="566.5" y="670.3" width="7.5" height="3.5" fill="#777"/>
<circle cx="611.5" cy="669.3" r="4.2" fill="#dcecf2" stroke="#333" stroke-width="1.2"/><path d="M614.5,672.3 L617.5,675.5" stroke="#333" stroke-width="2.2"/>
<path d="M617,665 L621,665 M619,663 L619,667 M617,668 L621,668" stroke="#444" stroke-width=".9"/>
<circle cx="633" cy="669.5" r="5.2" fill="#dcecf2" stroke="#333" stroke-width="1.2"/><path d="M636.8,673.3 L640.5,677" stroke="#333" stroke-width="2.2"/>
<path d="M627,664 L629,664 M627,664 L627,666 M627,675 L627,677 L629,677 M638,664 L640,664 L640,666" stroke="#999" stroke-width=".8"/>
<g fill="#444"><path d="M553,669 L558,669 L555.5,672 Z"/><path d="M645,669 L650,669 L647.5,672 Z"/><path d="M678,669 L683,669 L680.5,672 Z"/><path d="M704,669 L709,669 L706.5,672 Z"/><path d="M730,669 L735,669 L732.5,672 Z"/></g>
<rect x="662" y="664" width="14" height="10" fill="#8fb3dd" stroke="#555" stroke-width="1"/><path d="M666,677 L672,677" stroke="#555" stroke-width="1.5"/>
<g stroke="#666" stroke-width=".8"><rect x="688" y="664" width="13" height="13" fill="none"/><path d="M691,664 L691,677 M694,664 L694,677 M697,664 L697,677 M688,667 L701,667 M688,670 L701,670 M688,673 L701,673"/></g>
<rect x="714" y="664" width="13" height="12" fill="#6d9bd1" stroke="#555" stroke-width=".8"/><path d="M720.5,664 L720.5,676 M714,670 L727,670" stroke="#eee" stroke-width="1"/>
</svg>

<div class="a" style="left:2px;top:684px;width:1274px;height:2px;background:#ececec"></div>
<div class="a" style="left:895px;top:684px;width:18px;height:2px;background:#8a3a30"></div>
<div class="a" style="left:913px;top:684px;width:16px;height:2px;background:#555"></div>
<div class="a" style="left:937px;top:684px;width:17px;height:1px;background:#999"></div>
<div class="a" style="left:962px;top:684px;width:192px;height:2px;background:repeating-linear-gradient(90deg,#555 0 3px,#bbb 3px 5px)"></div>
<div class="a" style="left:0;top:686px;width:1280px;height:34px;background:#d6e7f0"></div>
<div class="a" style="left:205px;top:686px;width:41px;height:34px;background:#e8f2f8"></div>
<div class="a" style="left:126px;top:718px;width:34px;height:2px;background:#3a72b5"></div>
<div class="a" style="left:167px;top:718px;width:34px;height:2px;background:#3a72b5"></div>
<div class="a" style="left:205px;top:718px;width:41px;height:2px;background:#3a72b5"></div>
<div class="a" style="left:250px;top:718px;width:34px;height:2px;background:#3a72b5"></div>
<svg class="a" style="left:0;top:686px" width="1280" height="34" viewBox="0 686 1280 34">
<g fill="#111"><path d="M13,697.5 L19.3,696.6 L19.3,702.6 L13,702.6 Z M20.2,696.5 L27,695.5 L27,702.6 L20.2,702.6 Z M13,703.4 L19.3,703.4 L19.3,709.4 L13,708.5 Z M20.2,703.4 L27,703.4 L27,710.5 L20.2,709.5 Z"/></g>
<circle cx="62" cy="701" r="4.5" fill="none" stroke="#222" stroke-width="1.3"/><path d="M58.8,704.2 L53,710" stroke="#222" stroke-width="1.5"/>
<g stroke="#222" stroke-width="1.2" fill="none"><rect x="96" y="699" width="8" height="9"/><path d="M93,697 L107,697 M93,710 L107,710 M106,699 L106,708"/></g>
<path d="M133,697 L140,697 L142,699 L152,699 L152,712 L133,712 Z" fill="#f3c044"/>
<path d="M133,702 L152,702 L152,712 L133,712 Z" fill="#f8d66a"/>
<path d="M137,706 L148,706 L148,712 L145,712 L145,709 L140,709 L140,712 L137,712 Z" fill="#2c7cc8"/>
<circle cx="183" cy="703.5" r="9.5" fill="#dd4b3e"/>
<path d="M183,703.5 L191.2,698.7 A9.5,9.5 0 0 1 178.3,711.8 Z" fill="#f0b72f"/>
<path d="M183,703.5 L178.3,711.8 A9.5,9.5 0 0 1 174.8,698.7 Z" fill="#2ba14d"/>
<circle cx="183" cy="703.5" r="4.4" fill="#fff"/><circle cx="183" cy="703.5" r="3.4" fill="#3f7fe0"/>
<rect x="216" y="694" width="18" height="19" fill="#fbe0c6"/>
<path d="M220,696 L230,696 L230,699 L223,699 L223,702 L229,702 L229,705 L223,705 L223,711 L220,711 Z" fill="#e8893a"/>
<circle cx="266.5" cy="703" r="10" fill="#1e1e1e"/><circle cx="266.5" cy="703" r="8" fill="#9bd35a"/><circle cx="266.5" cy="703" r="6.5" fill="#1e1e1e"/>
<path d="M262,707 L270,699 L272,701 L264,709 Z" fill="#fff"/>
<path d="M1013,706 L1018.5,700 L1024,706" stroke="#222" stroke-width="1.2" fill="none"/>
<g stroke="#222" stroke-width="1" fill="none"><rect x="1035" y="700.5" width="10" height="6.5"/><path d="M1032,701 L1032,707 M1033,699 L1035,699"/></g>
<path d="M1053,702 L1056,702 L1059,699 L1059,708 L1056,705 L1053,705 Z" fill="none" stroke="#222" stroke-width="1"/>
<path d="M1061,701 C1062.5,702.5 1062.5,704.5 1061,706 M1063,699.5 C1065.5,702 1065.5,705 1063,707.5" stroke="#777" stroke-width=".9" fill="none"/>
<circle cx="1078.5" cy="703.3" r="6.2" fill="none" stroke="#222" stroke-width="1.1"/>
<path d="M1072.3,703.3 L1084.7,703.3 M1078.5,697 L1078.5,709.5" stroke="#222" stroke-width=".9"/>
<ellipse cx="1078.5" cy="703.3" rx="3" ry="6.2" fill="none" stroke="#222" stroke-width=".9"/>
<circle cx="1083" cy="707.5" r="2.8" fill="#d6e7f0" stroke="#222" stroke-width=".9"/>
<path d="M1093,707 C1092,703 1095,700 1098,701 C1099,697 1105,698 1105,702 C1107,702 1107,707 1105,707 Z" fill="#888"/>
<circle cx="1102" cy="707" r="3.7" fill="#e02828"/><path d="M1100.3,705.3 L1103.7,708.7 M1103.7,705.3 L1100.3,708.7" stroke="#fff" stroke-width="1"/>
<path d="M1208,698 L1208,708 M1212,698 L1212,708 L1216,702 L1220,708 L1220,698" stroke="#fff" stroke-width="1.8" fill="none"/>
<circle cx="1228.7" cy="709" r="4.5" fill="#555"/><path d="M1226.5,709 L1231,709" stroke="#ddd" stroke-width="1"/>
<path d="M1245,697 L1259,697 L1259,706 L1250,706 L1247,709 L1247,706 L1245,706 Z" fill="#222"/>
<path d="M1247.5,699.5 L1256.5,699.5 M1247.5,701.8 L1256.5,701.8 M1247.5,704 L1254,704" stroke="#d6e7f0" stroke-width=".9"/>
<circle cx="1258.5" cy="709.5" r="5.8" fill="#e8eef4" stroke="#555" stroke-width="1"/>
<text x="1258.5" y="712.8" font-size="8.5" fill="#111" text-anchor="middle" font-family="Liberation Sans">1</text>
</svg>
<div class="nx" style="left:1114px;top:698px;font-size:9.5px;color:#222">ENG</div>
<div class="nx" style="left:1155px;top:690px;font-size:10px;color:#222;letter-spacing:-0.2px">15:55</div>
<div class="nx" style="left:1144px;top:705px;font-size:10px;color:#222;letter-spacing:-0.3px">28.11.2020</div>

</body></html>
